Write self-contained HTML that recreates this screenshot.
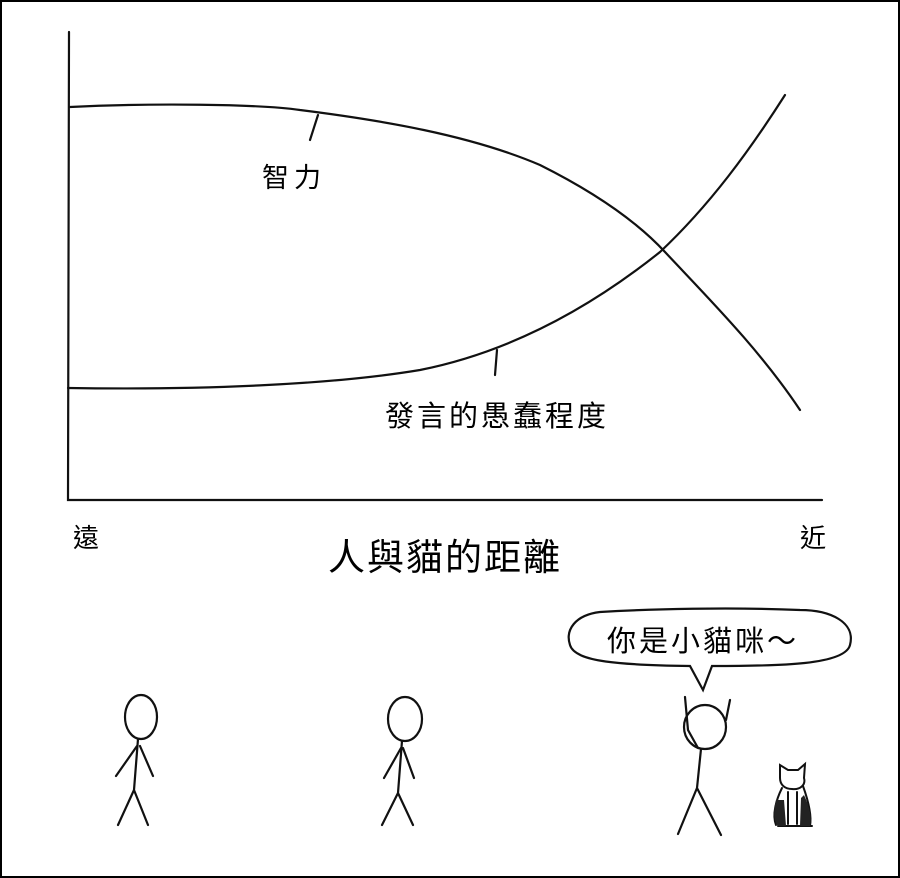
<!DOCTYPE html>
<html><head><meta charset="utf-8"><style>
html,body{margin:0;padding:0;background:#fff}
svg{display:block}
text{font-family:"Liberation Sans","Noto Sans CJK TC","WenQuanYi Zen Hei",sans-serif;fill:#000}
</style></head><body>
<svg width="900" height="878" viewBox="0 0 900 878" xmlns="http://www.w3.org/2000/svg">
<rect x="1" y="1" width="898" height="876" fill="#fff" stroke="#000" stroke-width="2"/>
<g fill="none" stroke="#111" stroke-width="2.2" stroke-linecap="round">
<path d="M69 32 L68 500 L822 500"/>
<path d="M70 107 C150 103 260 104 300 110 C380 120 470 135 540 165 C600 195 640 225 665 252 C710 300 760 350 800 410"/>
<path d="M68 388 C200 390 330 385 420 370 C520 350 600 300 660 252 C710 205 750 150 785 95"/>
<path d="M318 115 L310 140"/>
<path d="M497 350 L495 375"/>
<path d="M600 612 C575 615 565 630 570 645 C575 662 620 665 690 666 L703 690 L712 666 C780 666 845 665 850 645 C856 622 830 610 800 610 C730 607 650 609 600 612 Z"/>
<ellipse cx="141" cy="717" rx="16" ry="22"/>
<path d="M138 739 L134 790 M137 746 L116 776 M140 746 L153 776 M134 790 L118 825 M134 790 L148 825"/>
<ellipse cx="405" cy="719" rx="17" ry="22"/>
<path d="M402 741 L398 793 M401 748 L384 778 M403 748 L414 778 M398 793 L382 825 M398 793 L413 825"/>
<ellipse cx="705" cy="727" rx="21" ry="22"/>
<path d="M685 697 L688 730 L698 748 M730 700 L726 720 M701 749 L697 788 M697 788 L678 834 M697 788 L721 835"/>
</g>
<g fill="none" stroke="#111" stroke-width="2" stroke-linecap="round">
<path d="M780 778 L780 765 L788 770 L798 770 L805 764 L804 778 C806 785 800 790 792 789 C785 789 780 785 780 778 Z"/>
<path d="M782 788 C776 800 772 815 776 825 M803 786 C808 800 812 815 810 826 M778 826 L812 826 M788 792 L788 824 M797 792 L797 824"/>
</g>
<path d="M776 800 C773 812 774 822 778 826 L786 826 L784 800 Z M804 795 C810 808 812 818 810 826 L800 826 L801 798 Z" fill="#222"/>
<text x="262" y="187" font-size="27" letter-spacing="5">智力</text>
<text x="385" y="426" font-size="29" letter-spacing="3">發言的愚蠢程度</text>
<text x="73" y="547" font-size="26">遠</text>
<text x="800" y="547" font-size="26">近</text>
<text x="328" y="570" font-size="37" letter-spacing="2">人與貓的距離</text>
<text x="607" y="651" font-size="29" letter-spacing="3">你是小貓咪～</text>
</svg>
</body></html>
